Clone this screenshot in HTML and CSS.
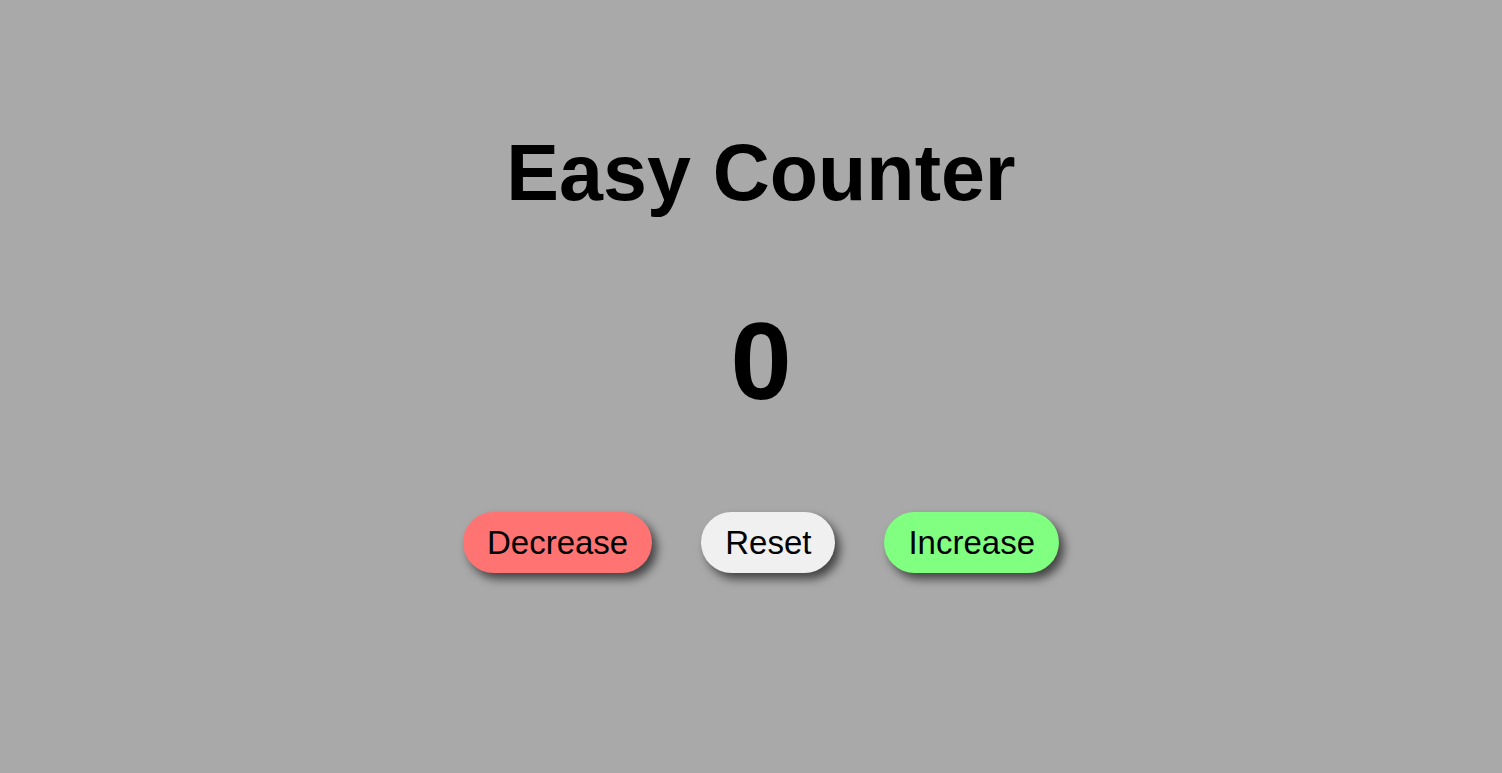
FILE: index.html
```html
<!DOCTYPE html>
<html lang="en">
<head>
<meta charset="utf-8">
<title>Easy Counter</title>
<link rel="stylesheet" href="styles.css">
</head>
<body>
<main class="app">
  <h1 class="title">Easy Counter</h1>
  <div class="count">0</div>
  <div class="controls">
    <button class="btn btn-dec">Decrease</button>
    <button class="btn btn-reset">Reset</button>
    <button class="btn btn-inc">Increase</button>
  </div>
</main>
</body>
</html>
```
FILE: styles.css
```css
html, body {
  margin: 0;
  height: 100%;
}
body {
  background: #a9a9a9;
  font-family: "Liberation Sans", Arial, sans-serif;
  color: #000;
}
.app {
  display: flex;
  flex-direction: column;
  align-items: center;
  padding: 127px 0 0 20px;
}
.title {
  margin: 0;
  font-size: 79px;
  font-weight: 700;
  line-height: normal;
}
.count {
  margin-top: 78px;
  font-size: 110px;
  font-weight: 700;
  line-height: normal;
}
.controls {
  margin-top: 88px;
  display: flex;
  gap: 49px;
}
.btn {
  font-family: "Liberation Sans", Arial, sans-serif;
  font-size: 33px;
  line-height: 37px;
  padding: 12px 24px;
  border: none;
  border-radius: 31px;
  color: #000;
  box-shadow: 5px 6px 10px rgba(0, 0, 0, 0.6);
  cursor: pointer;
}
.btn-dec { background: #ff7373; }
.btn-reset { background: #f0f0f0; }
.btn-inc { background: #80ff80; }
```
